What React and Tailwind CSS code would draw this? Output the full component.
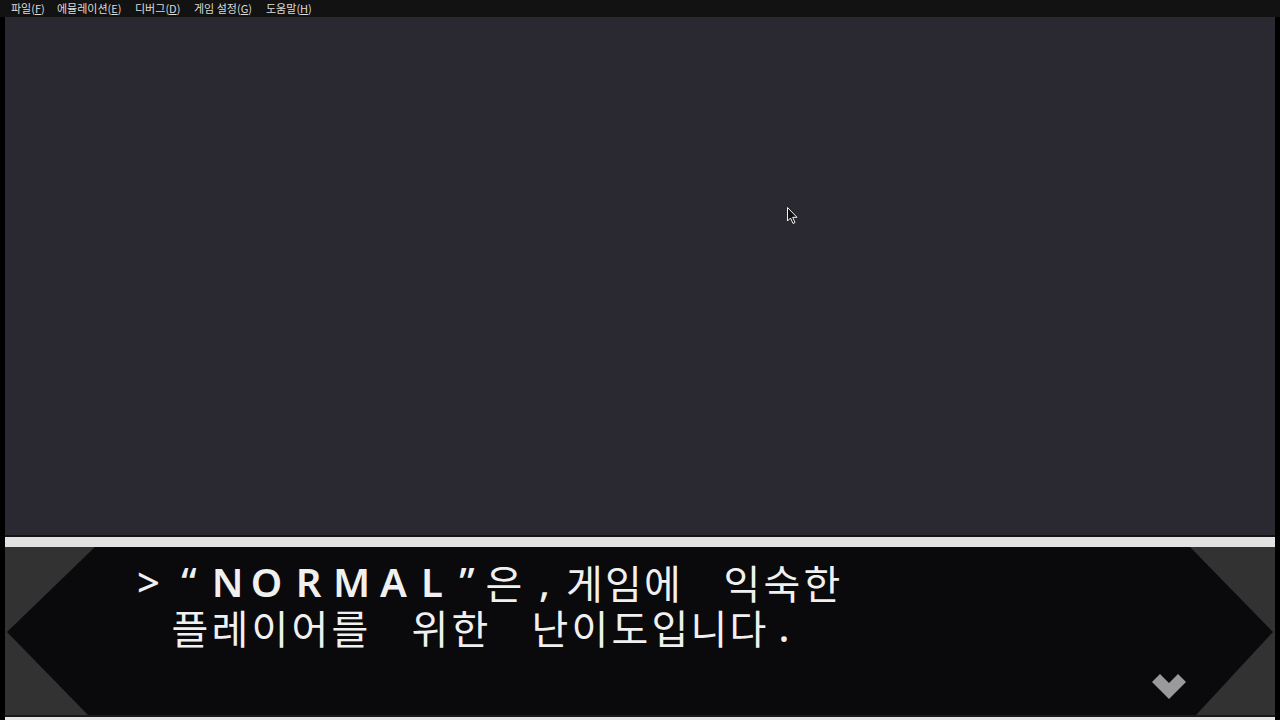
import React from 'react';

const menus = [
    { label: '파일', key: 'F', w: 'w-[46px]' },
    { label: '에뮬레이션', key: 'E', w: 'w-[78px]' },
    { label: '디버그', key: 'D', w: 'w-[59px]' },
    { label: '게임 설정', key: 'G', w: 'w-[72px]' },
    { label: '도움말', key: 'H', w: 'w-[60px]' },
];

// each glyph is centred in its own cell so the spacing matches the game's fixed grid
// third item: 'l' = latin letter (a bit heavier, like the game font), 'p' = punctuation
const line1 = [
    ['>', 'w-[41px]', 'p'], ['“', 'w-[40px]', 'p'], ['N', 'w-[37px]', 'l'], ['O', 'w-[41px]', 'l'],
    ['R', 'w-[43px]', 'l'], ['M', 'w-[43px]', 'l'], ['A', 'w-[41px]', 'l'], ['L', 'w-[36px]', 'l'],
    ['”', 'w-[34px]', 'p'], ['은', 'w-[40px]'], [',', 'w-[41px]', 'p'], ['게', 'w-[39px]'],
    ['임', 'w-[39px]'], ['에', 'w-[39px]'], [' ', 'w-[40px]'], ['익', 'w-[40px]'],
    ['숙', 'w-[40px]'], ['한', 'w-[40px]'],
];

const line2 = [
    ['플', 'w-[40px]'], ['레', 'w-[40px]'], ['이', 'w-[40px]'], ['어', 'w-[40px]'],
    ['를', 'w-[40px]'], [' ', 'w-[40px]'], ['위', 'w-[40px]'], ['한', 'w-[40px]'],
    [' ', 'w-[40px]'], ['난', 'w-[40px]'], ['이', 'w-[40px]'], ['도', 'w-[40px]'],
    ['입', 'w-[40px]'], ['니', 'w-[38px]'], ['다', 'w-[40px]'], ['.', 'w-[32px]', 'p'],
];

const kindClass = {
    l: "font-['Noto_Sans'] font-semibold text-[40px]",
    p: "font-['Noto_Sans'] font-medium text-[40px]",
};

const Line = ({ chars, pl }) => (
    <div className={`flex h-[45px] items-center whitespace-nowrap ${pl}`}>
        {chars.map(([c, w, kind], i) => (
            <span key={i} className={`inline-block ${w} text-center ${kind ? kindClass[kind] : ''}`}>
                {c}
            </span>
        ))}
    </div>
);

const Cursor = () => (
    <svg className="absolute left-[787px] top-[207px]" width="12" height="18" viewBox="0 0 12 18">
        <path d="M0.5 0.5 L0.5 14 L3.5 11 L6 16.5 L8 15.5 L5.7 10.3 L10 10.3 Z" fill="#111" stroke="#f2f2f2" strokeWidth="1" />
    </svg>
);

const App = () => {
    return (
        <div className="w-[1280px] h-[720px] bg-black flex flex-col overflow-hidden relative" style={{ fontFamily: '"Noto Sans CJK KR", "Noto Sans", sans-serif' }}>
            {/* menu bar */}
            <div className="h-[17px] bg-[#121212] flex items-center pl-[11px] text-[11px] leading-none text-[#dcdcdc]">
                {menus.map((m) => (
                    <span key={m.key} className={`${m.w} whitespace-nowrap`}>
                        {m.label}(<span className="underline">{m.key}</span>)
                    </span>
                ))}
            </div>

            <div className="flex-1 flex flex-col px-[5px]">
                {/* game screen */}
                <div className="h-[518px] bg-[#2a2931]" />
                <div className="h-[2px] bg-[#141416]" />
                <div className="h-[10px] bg-[#e2e2e2]" />

                {/* dialog box */}
                <div className="relative h-[168px] bg-[#323232] text-[#f0f0f0] text-[40px] leading-none">
                    <svg className="absolute inset-0" width="1270" height="168" viewBox="0 0 1270 168">
                        <polygon points="90,0 1185,0 1268,85 1191,168 83,168 2,85" fill="#0a090c" />
                    </svg>
                    <div className="relative pt-[12px] pl-[123px]">
                        <Line chars={line1} pl="" />
                        <Line chars={line2} pl="pl-[42px]" />
                    </div>
                    <svg className="absolute left-[1147px] top-[127px]" width="35" height="25" viewBox="0 0 35 25">
                        <polygon points="0,8 8,0 17,9 26,0 34,8 17,25" fill="#9a9a9a" />
                    </svg>
                </div>

                <div className="h-[2px] bg-[#1a1a1a]" />
                <div className="flex-1 bg-[#e6e6e6]" />
            </div>

            <Cursor />
        </div>
    );
};

export default App;
